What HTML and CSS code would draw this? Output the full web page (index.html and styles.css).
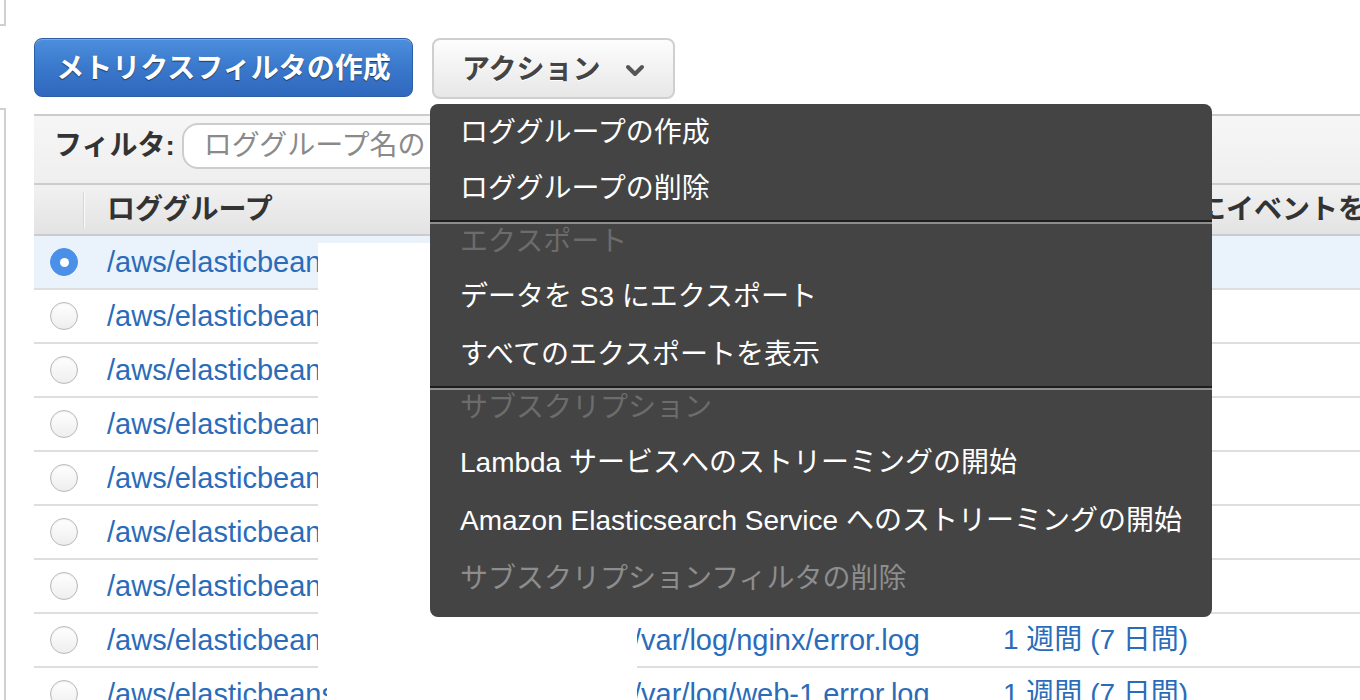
FILE: index.html
```html
<!DOCTYPE html>
<html lang="ja">
<head>
<meta charset="utf-8">
<title>CloudWatch Logs</title>
<link rel="stylesheet" href="styles.css">
</head>
<body>
<div class="page">
  <aside class="side">
    <div class="side-top"></div>
    <div class="side-bottom"></div>
  </aside>
  <main class="main">
    <div class="toolbar">
      <button class="btn btn-primary">メトリクスフィルタの作成</button>
      <button class="btn btn-action"><span>アクション</span>
        <svg class="chev" width="20" height="14" viewBox="0 0 20 14"><polyline points="3,3 10,10 17,3" fill="none" stroke="#555" stroke-width="4" stroke-linecap="round" stroke-linejoin="round"/></svg>
      </button>
    </div>
    <div class="filter-bar">
      <span class="filter-label">フィルタ:</span>
      <div class="filter-input">ロググループ名の　接頭辞でフィルタ</div>
    </div>
    <div class="table">
      <div class="grid thead">
        <div class="cell c0"></div>
        <div class="cell c1"><span class="divider"></span><span>ロググループ</span></div>
        <div class="cell c2">インサイト</div>
        <div class="cell c3">保存期間</div>
        <div class="cell c4">最後にイベントを受信した日時</div>
      </div>
      <div class="grid trow selected">
        <div class="cell c0"><span class="radio checked"></span></div>
        <div class="cell c1"><a class="link">/aws/elasticbeanstalk/app-prod/var/log/eb-activity.log</a></div>
        <div class="cell c2"><a class="link">/var/log/eb-activity.log</a></div>
        <div class="cell c3"><a class="link">1 週間 (7 日間)</a></div>
        <div class="cell c4"></div>
      </div>
      <div class="grid trow">
        <div class="cell c0"><span class="radio"></span></div>
        <div class="cell c1"><a class="link">/aws/elasticbeanstalk/app-prod/var/log/eb-commandprocessor.log</a></div>
        <div class="cell c2"><a class="link">/var/log/eb-commandprocessor.log</a></div>
        <div class="cell c3"><a class="link">1 週間 (7 日間)</a></div>
        <div class="cell c4"></div>
      </div>
      <div class="grid trow">
        <div class="cell c0"><span class="radio"></span></div>
        <div class="cell c1"><a class="link">/aws/elasticbeanstalk/app-prod/var/log/eb-docker/containers</a></div>
        <div class="cell c2"><a class="link">/var/log/eb-docker/containers</a></div>
        <div class="cell c3"><a class="link">1 週間 (7 日間)</a></div>
        <div class="cell c4"></div>
      </div>
      <div class="grid trow">
        <div class="cell c0"><span class="radio"></span></div>
        <div class="cell c1"><a class="link">/aws/elasticbeanstalk/app-prod/var/log/eb-ecs-mgr.log</a></div>
        <div class="cell c2"><a class="link">/var/log/eb-ecs-mgr.log</a></div>
        <div class="cell c3"><a class="link">1 週間 (7 日間)</a></div>
        <div class="cell c4"></div>
      </div>
      <div class="grid trow">
        <div class="cell c0"><span class="radio"></span></div>
        <div class="cell c1"><a class="link">/aws/elasticbeanstalk/app-prod/var/log/ecs/ecs-agent.log</a></div>
        <div class="cell c2"><a class="link">/var/log/ecs/ecs-agent.log</a></div>
        <div class="cell c3"><a class="link">1 週間 (7 日間)</a></div>
        <div class="cell c4"></div>
      </div>
      <div class="grid trow">
        <div class="cell c0"><span class="radio"></span></div>
        <div class="cell c1"><a class="link">/aws/elasticbeanstalk/app-prod/var/log/ecs/ecs-init.log</a></div>
        <div class="cell c2"><a class="link">/var/log/ecs/ecs-init.log</a></div>
        <div class="cell c3"><a class="link">1 週間 (7 日間)</a></div>
        <div class="cell c4"></div>
      </div>
      <div class="grid trow">
        <div class="cell c0"><span class="radio"></span></div>
        <div class="cell c1"><a class="link">/aws/elasticbeanstalk/app-prod/var/log/nginx/access.log</a></div>
        <div class="cell c2"><a class="link">/var/log/nginx/access.log</a></div>
        <div class="cell c3"><a class="link">1 週間 (7 日間)</a></div>
        <div class="cell c4"></div>
      </div>
      <div class="grid trow">
        <div class="cell c0"><span class="radio"></span></div>
        <div class="cell c1"><a class="link">/aws/elasticbeanstalk/app-prod/var/log/nginx/error.log</a></div>
        <div class="cell c2"><a class="link">/var/log/nginx/error.log</a></div>
        <div class="cell c3"><a class="link">1 週間 (7 日間)</a></div>
        <div class="cell c4"></div>
      </div>
      <div class="grid trow">
        <div class="cell c0"><span class="radio"></span></div>
        <div class="cell c1"><a class="link">/aws/elasticbeanstalk/app-prod/var/log/web-1.error.log</a></div>
        <div class="cell c2"><a class="link">/var/log/web-1.error.log</a></div>
        <div class="cell c3"><a class="link">1 週間 (7 日間)</a></div>
        <div class="cell c4"></div>
      </div>
    </div>
  </main>

  <div class="redact redact-a"></div>
  <div class="redact redact-b"></div>

  <div class="menu">
    <div class="menu-item first">ロググループの作成</div>
    <div class="menu-item">ロググループの削除</div>
    <div class="menu-sep"></div>
    <div class="menu-head">エクスポート</div>
    <div class="menu-item">データを S3 にエクスポート</div>
    <div class="menu-item">すべてのエクスポートを表示</div>
    <div class="menu-sep"></div>
    <div class="menu-head">サブスクリプション</div>
    <div class="menu-item">Lambda サービスへのストリーミングの開始</div>
    <div class="menu-item">Amazon Elasticsearch Service へのストリーミングの開始</div>
    <div class="menu-item disabled">サブスクリプションフィルタの削除</div>
  </div>
</div>
</body>
</html>
```

FILE: styles.css
```css
* { box-sizing: border-box; }

html, body {
  margin: 0;
  padding: 0;
  background: #fff;
}

body {
  width: 1360px;
  height: 700px;
  overflow: hidden;
  font-family: "Liberation Sans", "Noto Sans CJK JP", sans-serif;
  color: #333;
}

.page {
  position: relative;
  display: flex;
  width: 1360px;
  height: 700px;
  overflow: hidden;
}

/* left sidebar edge */
.side {
  width: 6px;
  flex: none;
  display: flex;
  flex-direction: column;
}
.side-top {
  height: 26px;
  border-right: 2px solid #d0d0d0;
  border-bottom: 2px solid #d0d0d0;
}
.side-bottom {
  flex: 1;
  margin-top: 82px;
  border-right: 2px solid #d0d0d0;
  border-top: 2px solid #d0d0d0;
}

.main {
  flex: 1;
  margin-left: 28px;
  min-width: 0;
  overflow: hidden;
}

/* toolbar */
.toolbar {
  display: flex;
  align-items: flex-start;
  gap: 19px;
  padding-top: 38px;
}
.btn {
  font-family: "Liberation Sans", "Noto Sans CJK JP", sans-serif;
  font-size: 28px;
  font-weight: 700;
  border-radius: 8px;
  cursor: pointer;
  white-space: nowrap;
  padding: 0;
  line-height: 1;
}
.btn-primary {
  width: 379px;
  height: 59px;
  color: #fff;
  border: 1px solid #2c5fa6;
  background: linear-gradient(#4c8fdd, #3a78cc 50%, #2f68bd);
  box-shadow: inset 0 1px 0 rgba(255,255,255,.25);
  text-shadow: 0 1px 1px rgba(0,0,0,.55);
  padding-top: 2px;
}
.btn-action {
  width: 243px;
  height: 61px;
  color: #444;
  border: 2px solid #cfcfcf;
  background: linear-gradient(#fdfdfd, #e7e7e7);
  text-shadow: 0 1px 0 #fff;
  display: flex;
  align-items: center;
  padding-left: 28px;
  padding-top: 2px;
}
.chev {
  margin-left: 24px;
  margin-top: 2px;
}

/* filter bar */
.filter-bar {
  margin-top: 15px;
  height: 71px;
  border-top: 2px solid #cccccc;
  border-bottom: 2px solid #cccccc;
  background: linear-gradient(#f6f6f6, #efefef);
  display: flex;
  align-items: flex-start;
  padding: 7px 0 0 20px;
}
.filter-label {
  font-size: 28px;
  font-weight: 700;
  line-height: 46px;
  color: #333;
  margin-right: 7px;
  white-space: nowrap;
}
.filter-input {
  width: 460px;
  height: 46px;
  border: 2px solid #cdcdcd;
  border-radius: 16px;
  background: #fff;
  font-size: 28px;
  line-height: 42px;
  color: #8a8a8a;
  padding-left: 20px;
  white-space: nowrap;
  overflow: hidden;
}

/* table */
.grid {
  display: grid;
  grid-template-columns: 49px 526px 370px 149px 1fr;
}
.cell {
  display: flex;
  align-items: center;
  padding-left: 24px;
  white-space: nowrap;
  min-width: 0;
}
.c0 { padding-left: 16px; }
.c1 { overflow: hidden; }
.c3, .c4 { overflow: visible; }

.thead {
  height: 51px;
  border-bottom: 2px solid #cccccc;
  background: linear-gradient(#f1f1f1, #e3e3e3);
  font-size: 28px;
  font-weight: 700;
  color: #333;
  line-height: 1;
}
.thead .c1 { padding-left: 0; }
.thead .c4 { padding-left: 14px; }
.divider {
  width: 2px;
  height: 36px;
  background: #fafafa;
  border-left: 1px solid #d6d6d6;
  margin-right: 22px;
  flex: none;
}

.trow {
  height: 54px;
  border-bottom: 2px solid #dedede;
  font-size: 29px;
  line-height: 1;
}
.trow .c3 {
  font-size: 28px;
}
.trow.selected {
  background: #eaf2fc;
}
.link {
  color: #2a6cb9;
  text-decoration: none;
}

.radio {
  width: 28px;
  height: 28px;
  border-radius: 50%;
  border: 1px solid #b8b8b8;
  background: linear-gradient(#ffffff, #eeeeee);
  box-shadow: inset 0 1px 2px rgba(0,0,0,.06), 0 1px 0 rgba(255,255,255,.8);
  display: flex;
  align-items: center;
  justify-content: center;
}
.radio.checked {
  border-color: #4a8fe8;
  background: #4a8fe8;
  box-shadow: none;
}
.radio.checked::after {
  content: "";
  width: 9px;
  height: 9px;
  border-radius: 50%;
  background: #fff;
}

/* redaction boxes laid over the table */
.redact {
  position: absolute;
  background: #fff;
}
.redact-a {
  left: 318px;
  top: 243px;
  width: 319px;
  height: 433px;
}
.redact-b {
  left: 327px;
  top: 676px;
  width: 310px;
  height: 24px;
}

/* dropdown menu */
.menu {
  position: absolute;
  left: 430px;
  top: 104px;
  width: 782px;
  background: #444444;
  border-radius: 8px;
  padding-bottom: 9px;
  font-size: 28px;
  color: #fff;
  z-index: 5;
}
.menu-item {
  height: 58px;
  line-height: 58px;
  padding-left: 30px;
  white-space: nowrap;
}
.menu-item.first {
  height: 56px;
  line-height: 58px;
}
.menu-item.disabled {
  color: #8d8d8d;
}
.menu-head {
  height: 44px;
  line-height: 36px;
  padding-left: 30px;
  color: #6c6c6c;
  white-space: nowrap;
}
.menu-sep {
  margin-top: 2px;
  height: 4px;
  border-top: 2px solid #1e1e1e;
  border-bottom: 2px solid #8e8e8e;
}
```
